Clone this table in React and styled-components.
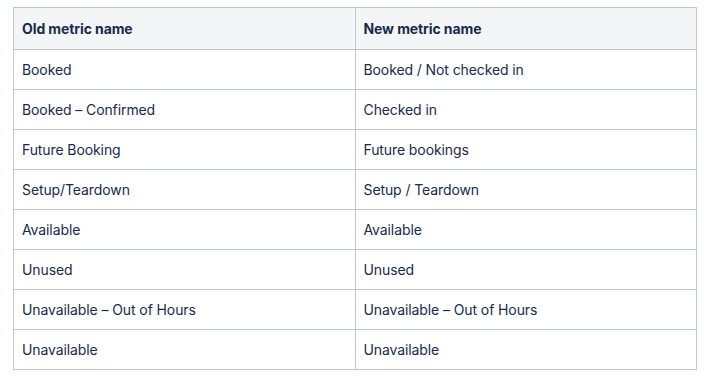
import React from 'react';
import styled, { createGlobalStyle } from 'styled-components';

const GlobalStyle = createGlobalStyle`
  body {
    margin: 0;
    background: #ffffff;
    font-family: Inter, "Noto Sans", sans-serif;
    color: #172b4d;
  }
`;

const Page = styled.div`
  padding: 7px 0 0 13px;
`;

const Table = styled.table`
  width: 684px;
  border-collapse: collapse;
  table-layout: fixed;
  font-size: 14px;
  letter-spacing: -0.1px;
`;

const HeadCell = styled.th`
  width: 50%;
  height: 42px;
  padding: 0 8px;
  text-align: left;
  font-weight: 700;
  background: #f4f5f7;
  border: 1px solid #c1c7d0;
  box-sizing: border-box;
`;

const Cell = styled.td`
  height: 40px;
  padding: 0 8px;
  border: 1px solid #c1c7d0;
  box-sizing: border-box;
`;

const rows = [
  ['Booked', 'Booked / Not checked in'],
  ['Booked – Confirmed', 'Checked in'],
  ['Future Booking', 'Future bookings'],
  ['Setup/Teardown', 'Setup / Teardown'],
  ['Available', 'Available'],
  ['Unused', 'Unused'],
  ['Unavailable – Out of Hours', 'Unavailable – Out of Hours'],
  ['Unavailable', 'Unavailable'],
];

const App = () =>
  <Page>
    <GlobalStyle />
    <Table>
      <thead>
        <tr>
          <HeadCell>Old metric name</HeadCell>
          <HeadCell>New metric name</HeadCell>
        </tr>
      </thead>
      <tbody>
        {rows.map(([oldName, newName]) =>
          <tr key={oldName}>
            <Cell>{oldName}</Cell>
            <Cell>{newName}</Cell>
          </tr>
        )}
      </tbody>
    </Table>
  </Page>;

export default App;
